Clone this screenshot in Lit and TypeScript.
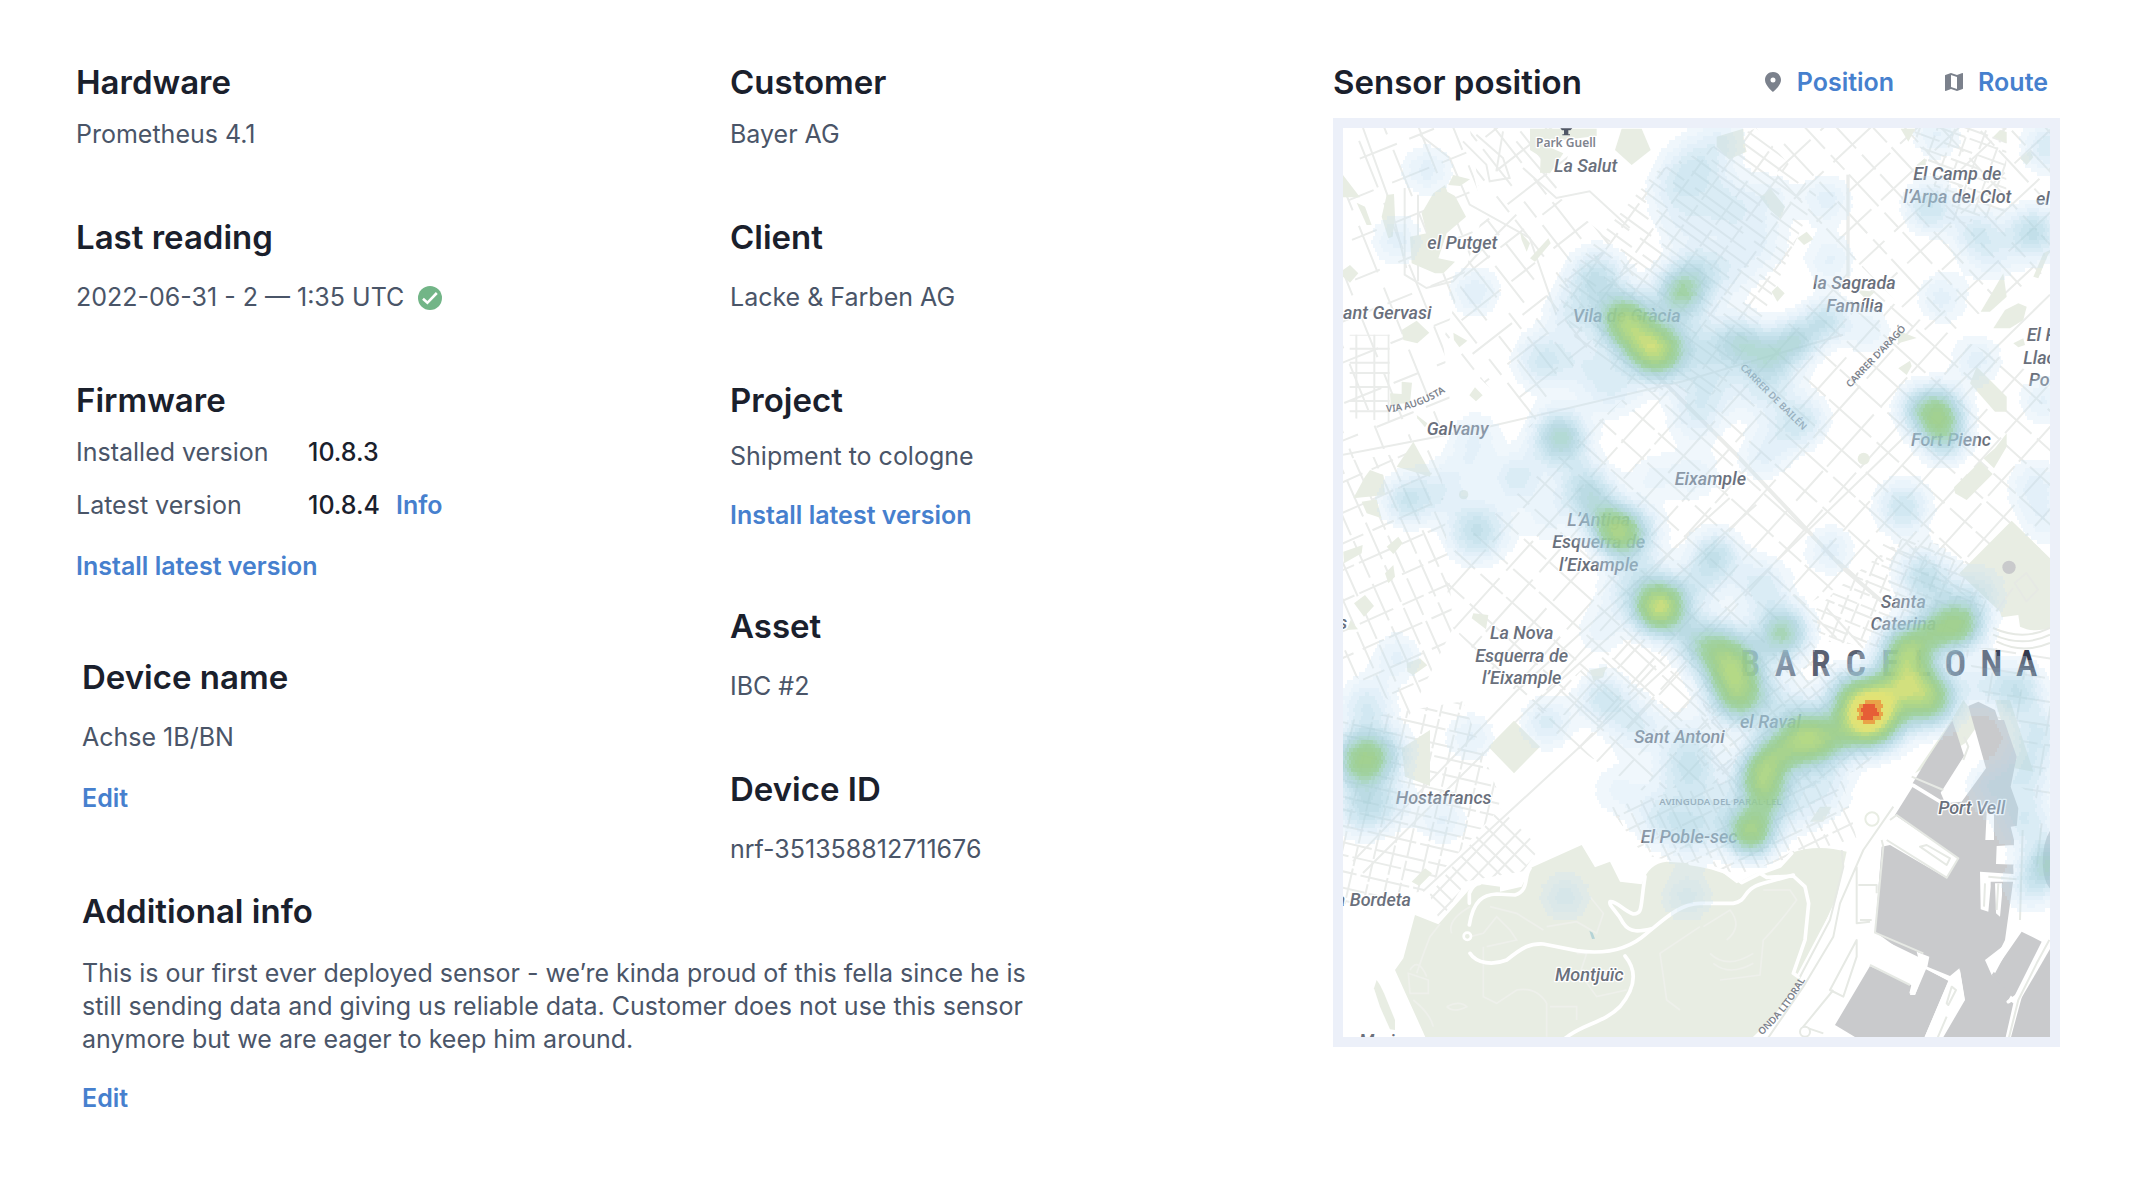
import { LitElement, html, css, svg } from "lit";
import { customElement } from "lit/decorators.js";

/* Map drawing units: three per CSS pixel on a wide screen. */
const MAP_W = 2121;
const MAP_H = 2727;

/* ---------- heat layer ---------- */

/* x, y, weight, spread (in thirds of the drawing unit) */
const HEAT: [number, number, number, number?][] = [
  [84, 42, 0.12], [54, 112, 0.12], [132, 164, 0.13], [354, 39, 0.16, 20], [327, 58, 0.08], [340, 92, 0.1, 20],
  [254, 149, 0.22, 18], [232, 184, 0.14, 18], [282, 192, 0.48, 15], [314, 222, 0.56, 16], [338, 165, 0.34, 15],
  [294, 214, 0.14, 14], [200, 232, 0.18, 18], [246, 238, 0.1, 18], [270, 262, 0.12, 18], [217, 310, 0.3, 16],
  [134, 305, 0.08], [380, 9, 0.08], [384, 78, 0.12, 18], [427, 69, 0.08, 18], [484, 72, 0.12], [487, 132, 0.11],
  [414, 115, 0.1, 20], [380, 146, 0.1, 20], [354, 140, 0.1, 16], [594, 6, 0.11], [704, 19, 0.16], [587, 79, 0.2, 16],
  [634, 105, 0.16, 16], [690, 105, 0.24, 17], [650, 132, 0.08], [599, 170, 0.12], [360, 215, 0.12, 18],
  [397, 215, 0.25, 16], [427, 229, 0.22, 16], [454, 212, 0.24, 15], [483, 192, 0.2, 14], [525, 202, 0.1],
  [367, 255, 0.13, 20], [424, 262, 0.13, 19], [464, 290, 0.12, 16], [352, 288, 0.12, 18], [594, 286, 0.42, 15],
  [570, 278, 0.1, 14], [602, 312, 0.2, 15], [634, 232, 0.12], [700, 272, 0.11], [174, 350, 0.15, 16],
  [244, 362, 0.25, 17], [276, 405, 0.46, 14], [260, 388, 0.16, 14], [300, 400, 0.1], [64, 372, 0.2, 16],
  [97, 362, 0.1], [124, 335, 0.08, 18], [134, 403, 0.24, 19], [204, 389, 0.08, 18], [310, 348, 0.08],
  [317, 479, 0.64, 15], [278, 462, 0.1, 16], [300, 440, 0.1], [354, 515, 0.2, 16], [257, 502, 0.09],
  [54, 529, 0.11], [24, 577, 0.16, 17], [20, 632, 0.46, 16], [48, 622, 0.12], [127, 609, 0.11], [204, 595, 0.15, 16],
  [260, 570, 0.18, 16], [292, 596, 0.14, 18], [420, 329, 0.11], [447, 302, 0.1], [352, 348, 0.1], [560, 379, 0.2, 17],
  [692, 359, 0.12, 18], [702, 396, 0.08], [487, 422, 0.12], [372, 427, 0.22, 16], [356, 456, 0.12, 16],
  [418, 458, 0.16, 18], [580, 448, 0.22, 17], [636, 464, 0.12, 17], [600, 470, 0.08], [440, 505, 0.34, 15],
  [387, 535, 0.46, 17], [397, 568, 0.4, 16], [372, 512, 0.1], [618, 497, 0.38, 14], [592, 503, 0.26, 13], [564, 522, 0.46, 15],
  [564, 552, 0.3, 14], [586, 570, 0.48, 16], [527, 584, 0.9, 18], [545, 560, 0.1, 14], [515, 600, 0.1, 16],
  [464, 610, 0.52, 16], [432, 626, 0.3, 14], [490, 614, 0.16, 14], [500, 560, 0.12, 14], [674, 562, 0.22, 17], [638, 555, 0.1],
  [695, 606, 0.16, 18], [440, 575, 0.1, 18], [222, 769, 0.12], [344, 769, 0.12], [20, 682, 0.2, 17],
  [48, 675, 0.1], [100, 692, 0.11], [347, 642, 0.2, 20], [318, 689, 0.14, 18], [274, 662, 0.08, 18], [350, 703, 0.16, 18],
  [417, 647, 0.36, 14], [424, 670, 0.26, 14], [408, 704, 0.48, 14], [378, 680, 0.1, 16], [480, 659, 0.13, 19],
  [457, 685, 0.07], [647, 659, 0.12], [684, 645, 0.14, 17], [682, 692, 0.16, 18], [707, 735, 0.26, 14],
  [686, 758, 0.14, 16], [345, 610, 0.08, 18],
];

/* Strong sources spread further than the faint ones. */
const SOURCES = HEAT.map(([x, y, w, s = 16]) =>
  w >= 0.26 ? { x, y, w: w * 1.15, s: s * 1.2 } : { x, y, w, s: s * 1.1 }
);

type Stop = [number, number, number, number, number];
const RAMP: Stop[] = [
  [0.045, 210, 230, 246, 0.27],
  [0.1, 196, 223, 243, 0.38],
  [0.18, 176, 214, 233, 0.56],
  [0.27, 162, 206, 220, 0.72],
  [0.35, 158, 208, 200, 0.8],
  [0.43, 152, 206, 158, 0.9],
  [0.54, 154, 205, 140, 0.95],
  [0.68, 178, 216, 132, 0.98],
  [0.82, 222, 227, 120, 1],
  [0.94, 226, 226, 116, 1],
];
const LEVELS = 30;
const FLOOR = 0.045;
const ORANGE = 0.98;
const RED = 1.05;

function rampColor(v: number): string {
  if (v > RED) return "rgb(230,94,54)";
  if (v > ORANGE) return "rgb(233,163,72)";
  let i = 0;
  while (i < RAMP.length - 2 && v > RAMP[i + 1][0]) i++;
  const a = RAMP[i];
  const b = RAMP[i + 1];
  const t = Math.max(0, Math.min(1, (v - a[0]) / (b[0] - a[0])));
  const mix = (k: number) => a[k] + (b[k] - a[k]) * t;
  return `rgba(${Math.round(mix(1))},${Math.round(mix(2))},${Math.round(mix(3))},${mix(4).toFixed(2)})`;
}

/* Rows of cells, every second row shifted by half a cell, merged into runs per level. */
function heatPaths() {
  const cell = 4;
  const cols = Math.ceil(707 / cell) + 1;
  const rows = Math.ceil(909 / cell);
  const d: string[] = Array.from({ length: LEVELS + 3 }, () => "");
  for (let r = 0; r < rows; r++) {
    const shift = r % 2 ? -2 : 0;
    const y = r * cell + 2;
    let start = 0;
    let prev = -1;
    for (let c = 0; c <= cols; c++) {
      let lvl = -1;
      if (c < cols) {
        const x = c * cell + shift + 2;
        let v = 0;
        for (const h of SOURCES) {
          const q = (h.x - x) ** 2 + (h.y - y) ** 2;
          if (q < 12 * h.s * h.s) v += h.w * Math.exp(-q / (2 * h.s * h.s));
        }
        if (v > RED) lvl = LEVELS + 2;
        else if (v > ORANGE) lvl = LEVELS + 1;
        else if (v > FLOOR) lvl = Math.floor(((v - FLOOR) / (ORANGE - FLOOR)) * LEVELS);
      }
      if (lvl !== prev) {
        if (prev >= 0) {
          const x0 = (start * cell + shift) * 3;
          const w = (c - start) * cell * 3;
          d[prev] += `M${x0} ${r * cell * 3}h${w}v12h-${w}z`;
        }
        start = c;
        prev = lvl;
      }
    }
  }
  return d.map((path, i) => {
    const v = i > LEVELS + 1 ? 3 : i > LEVELS ? (ORANGE + RED) / 2 : FLOOR + ((i + 0.5) / LEVELS) * (ORANGE - FLOOR);
    return path ? svg`<path fill=${rampColor(v)} d=${path}></path>` : null;
  });
}

/* ---------- street layer ---------- */

interface Zone {
  id: string;
  area: string;
  cx: number;
  cy: number;
  reach: number;
  angle: number;
  a: number;
  b: number;
  dashA?: string;
  dashB?: string;
}

const ZONES: Zone[] = [
  { id: "eixample", area: "M300 1300L620 1010L900 760L1100 830L1500 420L1700 560L2121 760V1240L1900 1420L1640 1290L1300 1480L1180 1700L1000 1830L560 1740L330 1500Z", cx: 1150, cy: 1200, reach: 1500, angle: 42, a: 84, b: 84, dashA: "170 22 90 14", dashB: "120 30 210 18" },
  { id: "gracia", area: "M640 480L940 130L1240 0L1420 200L1260 560L1130 800L880 790L700 640Z", cx: 950, cy: 450, reach: 700, angle: 36, a: 32, b: 74, dashA: "260 40", dashB: "90 20 60 12" },
  { id: "camp", area: "M1320 0L2121 0V420L1780 640L1520 380L1300 160Z", cx: 1800, cy: 250, reach: 700, angle: 47, a: 76, b: 92, dashA: "130 26 60 20", dashB: "180 40" },
  { id: "clot", area: "M1710 0H1990V250L1820 300Z", cx: 1860, cy: 130, reach: 300, angle: 20, a: 34, b: 46, dashA: "90 14", dashB: "60 16" },
  { id: "salut", area: "M380 0H700L640 200L900 420L560 900L300 640L420 260Z", cx: 600, cy: 420, reach: 700, angle: 52, a: 62, b: 96, dashA: "140 60 60 30", dashB: "90 40 150 70" },
  { id: "gervasi", area: "M0 0H360L420 260L300 640L330 900L0 1000Z", cx: 150, cy: 480, reach: 620, angle: 68, a: 92, b: 110, dashA: "150 50", dashB: "80 40 120 60" },
  { id: "augusta", area: "M20 620H140V880L20 870Z", cx: 80, cy: 750, reach: 240, angle: 0, a: 38, b: 50 },
  { id: "corts", area: "M0 1000L290 960L330 1500L200 1760L0 1620Z", cx: 150, cy: 1350, reach: 560, angle: 66, a: 52, b: 80, dashA: "120 20", dashB: "70 30 110 16" },
  { id: "hosta", area: "M0 1780L360 1720L480 2030L240 2290L0 2330Z", cx: 200, cy: 2030, reach: 420, angle: 13, a: 44, b: 50, dashA: "150 12", dashB: "90 10 60 8" },
  { id: "bordeta", area: "M260 2300L470 2040L590 2160L540 2230L370 2260L290 2380Z", cx: 430, cy: 2220, reach: 240, angle: 44, a: 38, b: 46 },
  { id: "antoni", area: "M560 1760L860 1500L1080 1600L1180 1760L1180 1960L900 1990L760 1900Z", cx: 900, cy: 1780, reach: 460, angle: 43, a: 80, b: 74, dashA: "180 24", dashB: "120 18" },
  { id: "poble", area: "M800 2040L1120 1960L1500 1960L1540 2130L1400 2170L1180 2240L900 2180Z", cx: 1150, cy: 2080, reach: 440, angle: 64, a: 38, b: 56, dashA: "130 12", dashB: "100 14" },
  { id: "raval", area: "M1090 1640L1400 1540L1580 1690L1700 1760L1560 1920L1260 2030L1060 1900Z", cx: 1350, cy: 1780, reach: 400, angle: 52, a: 36, b: 42, dashA: "90 12", dashB: "60 10" },
  { id: "gotic", area: "M1400 1460L1520 1350L1680 1230L1800 1250L1930 1420L1880 1560L1640 1560L1440 1540Z", cx: 1660, cy: 1410, reach: 360, angle: 22, a: 32, b: 44, dashA: "80 12 50 8", dashB: "60 14" },
  { id: "marina", area: "M1860 1560H2121V2040L2010 1960L1950 1760Z", cx: 2000, cy: 1780, reach: 340, angle: 9, a: 66, b: 90, dashA: "140 20", dashB: "90 30" },
];

function streetLines(z: Zone, across: boolean): string {
  const step = across ? z.b : z.a;
  let d = "";
  let i = 0;
  for (let o = -z.reach; o <= z.reach; o += step) {
    const j = ((i * 37) % 11) - 5;
    d += across ? `M${o + j} ${-z.reach + j * 9}V${z.reach}` : `M${-z.reach + j * 9} ${o + j}H${z.reach}`;
    i++;
  }
  return d;
}

const streets = () => ZONES.map(
  (z) => svg`
    <clipPath id=${"zone-" + z.id}><path d=${z.area}></path></clipPath>
    <g clip-path=${`url(#zone-${z.id})`}>
      <g transform=${`translate(${z.cx} ${z.cy}) rotate(${z.angle})`}>
        <path d=${streetLines(z, false)} stroke-dasharray=${z.dashA ?? "none"}></path>
        <path d=${streetLines(z, true)} stroke-dasharray=${z.dashB ?? "none"}></path>
      </g>
    </g>`
);

/* ---------- labels ---------- */

type Label = [string, number, number, ("start" | "end")?];
const PLACES: Label[] = [
  ["La Salut", 728, 133], ["el Putget", 358, 363], ["ant Gervasi", 0, 574, "start"], ["Vila de Gràcia", 851, 581],
  ["Galvany", 344, 921], ["El Camp de", 1843, 156], ["l’Arpa del Clot", 1843, 224], ["el", 2079, 232, "start"],
  ["la Sagrada", 1534, 483], ["Família", 1535, 551], ["El P", 2051, 640, "start"], ["Llac", 2041, 708, "start"],
  ["Po", 2057, 774, "start"], ["Fort Pienc", 1824, 954], ["L’Antiga", 767, 1194], ["Esquerra de", 767, 1261],
  ["l’Eixample", 767, 1328], ["La Nova", 536, 1534], ["Esquerra de", 536, 1601], ["l’Eixample", 536, 1668],
  ["s", 13, 1503, "end"], ["Eixample", 1102, 1071], ["Santa", 1681, 1441], ["Caterina", 1681, 1506],
  ["el Raval", 1191, 1799, "start"], ["Sant Antoni", 873, 1844, "start"], ["Hostafrancs", 302, 2028],
  ["El Poble-sec", 893, 2146, "start"], ["a Bordeta", 204, 2335, "end"], ["Montjuïc", 739, 2559],
  ["La Marina", 95, 2756], ["Port Vell", 1886, 2059],
];

const CITY = "BARCELONA";
const CITY_X = [1221, 1327, 1433, 1538, 1641, 1738, 1837, 1945, 2051];
const CITY_FILL = ["#6a7080", "#5a6172", "#5a6172", "#5a6172", "#6a7080", "#6a7080", "#4a5164", "#3c4357", "#333a4d"];

@customElement("sensor-map")
export class SensorMap extends LitElement {
  static styles = css`
    :host { display: block; border: 10px solid #ecf0f9; background: #fff; }
    svg { display: block; width: 100%; height: auto; }
    .place { font: italic 500 54px Roboto, "Liberation Sans", sans-serif; fill: #6a707c; text-anchor: middle; }
    .place.start { text-anchor: start; }
    .place.end { text-anchor: end; }
    .halo { paint-order: stroke; stroke: #fff; stroke-width: 8px; stroke-linejoin: round; }
    .road { font: 600 29px "Noto Sans", sans-serif; fill: #7c828c; }
    .poi { font: 600 36px "Noto Sans", sans-serif; fill: #7f848e; text-anchor: middle; }
    .city { font: 600 108px "Liberation Sans Narrow", "Roboto Condensed", Roboto, sans-serif; text-anchor: middle; }
    .park { fill: #e8ede3; }
    .water { fill: #c9cacc; }
    .streets { fill: none; stroke: #eaecea; stroke-width: 6; }
    .trail { fill: none; stroke: #eef0eb; stroke-width: 5; }
    .avenue { fill: none; stroke: #fff; stroke-width: 11; stroke-linecap: round; stroke-linejoin: round; }
    .pier { fill: #fff; }
    .quay { fill: none; stroke: #e6e9e4; stroke-width: 6; stroke-linejoin: round; }
  `;

  render() {
    return html`
      <svg viewBox="0 0 ${MAP_W} ${MAP_H}" role="img" aria-label="Sensor position">
        <g class="streets">${streets()}</g>

        <g class="streets">
          <path d="M0 980L420 900L1020 760L1500 620" />
          <path d="M30 2200L520 1690L1160 1110M60 2235L560 1740L1240 1130" />
          <path d="M240 2290L1000 1590L1640 970L2121 500" />
          <path d="M900 700L1180 980L1500 1320L1640 1440" stroke-width="12" />
          <path d="M1515 140V480" stroke-width="10" />
          <path d="M60 0L140 220L190 420M230 20L320 90L380 230L560 330L640 560" />
          <path d="M185 180V440L250 480L330 460L420 360L520 260M225 200V460" />
          <path d="M400 20L480 90L500 150L440 160L430 110L360 40M480 10L460 130" />
          <path d="M540 120L640 210L740 190L860 300M520 40L640 180" />
          <path d="M1620 1250L1700 1290L1760 1220M1450 1440L1560 1560M1350 1400L1480 1530" />
        </g>

        <!-- parks -->
        <g class="park" transform="translate(-39 -54)">
          <path d="M345 225L352 245L375 258L408 320L350 370L325 445L375 455L340 490L315 490L245 460L240 380L290 370L275 310L310 250Z" />
          <path d="M600 56H800V78L700 90L655 110L700 130L660 190L630 188L632 140L600 120Z" />
          <path d="M875 56H935L962 120L905 165L855 120Z" />
          <path d="M370 195L420 208L390 228L355 225Z" />
          <path d="M170 255L192 252L195 320L188 380L175 385L155 320Z" />
          <path d="M39 195L90 262L39 262Z" /><path d="M80 278L105 290L125 345L110 345Z" />
          <path d="M215 660L260 632L298 668L262 700L220 690Z" />
          <path d="M370 668L412 692L388 712L372 690Z" />
          <path d="M180 850L215 852L215 815L246 818L240 880L182 882Z" />
          <path d="M260 915L292 940L285 952L262 925Z" /><path d="M435 832L458 856L438 874L418 856Z" />
          <path d="M600 445L655 385L662 400L615 455Z" /><path d="M570 365L600 400L590 425L575 390Z" />
          <path d="M39 480L60 465L85 490L60 518L39 500Z" />
          <path d="M250 995L302 1090L300 1100L200 1070Z" /><path d="M70 1165L105 1100L120 1080L160 1095L165 1155Z" />
          <path d="M95 1175L140 1168L155 1225L110 1210Z" /><path d="M40 1325L98 1305L95 1330L42 1360Z" />
          <path d="M170 1310L205 1280L218 1300L190 1332Z" /><path d="M165 1390L190 1365L195 1400L175 1420Z" />
          <path d="M72 1480L105 1455L132 1488L102 1520Z" /><path d="M430 1510L475 1515L468 1558L425 1525Z" />
          <path d="M50 1560L62 1530L84 1558Z" /><circle cx="401" cy="1154" r="14" />
          <path d="M475 1910L552 1832L630 1910L552 1990Z" /><path d="M780 1680L828 1670L820 1702L790 1712Z" />
          <path d="M230 1660L270 1645L292 1666L250 1695L232 1685Z" />
          <path d="M215 1915L300 1860V2028L225 2000Z" /><path d="M245 2315L285 2275L306 2290L268 2328Z" />
        </g>
        <g class="park" transform="translate(1041 -54)">
          <path d="M80 80L160 56L162 95L170 125L118 148L80 110Z" /><path d="M210 262L242 236L285 290L272 328L240 300Z" />
          <path d="M322 385L350 365L370 388L342 405Z" /><path d="M245 545L262 528L284 550L262 575Z" />
          <path d="M632 56H675L655 95Z" /><path d="M910 80L930 60L950 66V100Z" /><path d="M990 145L1020 122L1030 142L1010 165Z" />
          <path d="M680 165L705 145L708 165Z" /><path d="M872 605L905 550L940 490L950 560L900 605Z" />
          <path d="M910 655L945 600L985 580L1010 590L1000 630L960 655Z" /><path d="M1030 500L1060 430L1080 420L1045 505Z" />
          <path d="M625 775L660 752L665 768L650 795Z" /><path d="M620 660L680 684L625 700Z" />
          <path d="M860 770L950 860V905L915 905L840 820Z" /><path d="M500 540L555 545L530 570Z" />
          <path d="M970 700L1000 685L1005 705L985 712Z" />
          <path d="M792 1132L870 1055L908 1092L830 1170L795 1150Z" /><path d="M880 1045L915 1015L950 970V1010L912 1075Z" />
          <circle cx="521" cy="1046" r="18" />
          <path d="M965 1232L1080 1345V1555Q1040 1565 1010 1558L990 1550L985 1515L935 1522L930 1505L808 1390Z" />
          <path d="M675 1990L785 1830L820 1770L850 1810L860 1850L825 1900Z" />
          <path d="M915 1770L960 1770L1030 1985L975 1975Z" />
          <path d="M390 2090H425L400 2135H360Z" />
        </g>
        <circle cx="1998" cy="1318" r="20" fill="#c9cacc" />

        <!-- hill park with its drives -->
        <g transform="translate(-39 1836)">
          <path class="park" d="M255 525L325 553L435 430L510 440L510 455L575 440L600 385L755 315L795 382L840 365L870 425L935 433Q955 370 1010 365L1080 370L1160 385L1220 430L1280 400L1350 375L1380 340Q1460 310 1550 335L1520 470L1440 650L1400 740L1330 830L1260 900H290L195 690L220 655Z" />
          <path class="park" d="M140 720L150 735L162 760L195 840V870L180 868L150 800L132 745Z" />
          <path class="trail" d="M365 580Q350 540 420 500M260 700Q280 640 300 590L330 552M420 590L460 580L500 530L540 570L560 600L470 620M460 620V770L500 790L560 750Q620 740 650 790V890M650 560L740 545L800 580L820 520L780 470M1110 560L990 640L1010 780L1050 810M640 570L560 520L480 500" />
          <path class="trail" d="M235 700L295 720V760H240ZM240 690Q265 650 290 710M250 780Q300 820 310 860M350 800Q390 780 410 800Q370 820 350 800M740 640L770 640L750 700L800 770L890 750M660 800H740V840M1170 720L1290 705L1300 600Q1340 560 1400 480L1380 450L1300 450M1140 640Q1190 690 1270 640M1150 670Q1200 710 1270 670M1120 560L1200 510Q1240 560 1190 600" />
          <path class="avenue" d="M418 555C430 480 460 464 500 462L555 465C600 450 580 410 600 385M418 490V460Q430 430 450 430M420 640C440 672 490 676 530 660C580 620 600 610 640 612L740 632C830 645 900 625 950 580C1000 540 1050 490 1110 490H1210C1260 480 1230 450 1300 430L1390 405" />
          <path class="avenue" d="M945 410C930 500 940 522 910 522C880 512 860 482 840 485C836 500 860 510 880 550C900 580 930 574 965 566M885 648C920 690 920 740 870 800C820 850 760 850 705 895" />
          <path class="avenue" d="M1080 370Q1180 385 1220 415L1235 428L1290 400L1350 378L1385 340M1290 400L1310 412L1390 408L1425 440L1436 490L1425 600L1390 700L1405 710L1500 530L1530 470" />
          <circle cx="412" cy="589" r="11" fill="#e8ede3" stroke="#fff" stroke-width="8" />
          <path d="M778 572L788 578L795 596L786 597Z" fill="#b5d3d6" />
        </g>

        <!-- harbour -->
        <g transform="translate(1041 1836)">
          <path class="pier" d="M560 900H205L330 720L430 560L600 240L668 130L760 190V900Z" />
          <path class="water" d="M787-58L800-20L822 48L752 158L765 188L700 158L668 130L710 60Z" />
          <path class="water" d="M668 140L765 190L815 185L888 85L835-102L865-115L915-90L925-60H942L980 50L962 140L985 205L980 262L985 320L970 380L975 420L965 560L950 610L885 660L905 705L950 735L975 745L955 780L970 790L945 900H755L825 780L810 690L775 715L700 680L555 575L575 320L600 315L770 415L805 355L615 225Z" />
          <path class="water" d="M540 678L665 735L660 765H675L705 685L775 722L700 900H510L435 855Z" />
          <path class="water" d="M995 575L1055 605L970 775L940 740L905 705Z" />
          <path class="water" d="M1090 610V900H955L985 790Z" />
          <path class="water" d="M1085 265Q1058 300 1058 370Q1060 430 1085 450Z" />
          <path class="pier" d="M890 218H912V300H886ZM920 318L985 314V374L918 372ZM870 395L980 403V425H902V440L895 515L872 508ZM915 430H936V465L930 530L918 520ZM962 260L998 255L990 300V540L960 615L915 700L885 660L905 680L945 600L970 420L972 300Z" />
          <path class="pier" d="M680 635L718 650L712 680L780 708L808 685L812 705L824 780L735 900H700L776 722L708 688L675 765L658 760L664 735L540 678L500 600L550 585L684 650Z" />
          <path class="avenue" d="M1085 580L1040 660L990 770L955 900M955 785L985 765M670 136L752 186" />
          <path class="quay" d="M600 240L620 225L805 355L770 413L590 300M690 320L770 375L780 355L710 315ZM575 300L580 320L555 578L700 640M455 330L460 380L420 540L330 710M500 380V550L540 545M505 435H560V460M510 540H545M610 200L520 330L450 490L430 590L340 740L230 900M500 600L420 750L460 770L500 650ZM540 675L660 735M430 750L340 860L400 880M1078 600L1040 670L985 780L955 900M998 270L990 540M1055 250L1040 380M895 410L980 418M885 430L882 500M925 430L920 510M770 830L740 900M770 790L785 740L798 750L775 795ZM665 110L760 150M820 60L835 20L822-10" />
          <circle cx="546" cy="237" r="20" fill="#fff" stroke="#e8ede3" stroke-width="6" />
          <circle cx="345" cy="875" r="15" fill="#fff" stroke="#e6e9e4" stroke-width="6" />
        </g>
        <path class="quay" d="M1950 1500Q2040 1540 2121 1500M1950 1520Q2040 1560 2121 1520M1960 1540Q2040 1580 2121 1545" />
        <path class="quay" d="M2015 1365L2050 1335L2085 1385L2050 1420ZM2010 1380L1960 1450" />

        <!-- labels -->
        <path d="M652 1h36l-6 6h-6v12h5v3h-23v-3h5v-12h-6z" fill="#4f5665" />
        <text class="poi halo" x="669" y="56">Park Guell</text>
        ${PLACES.map(([t, x, y, a]) => svg`<text class=${"place halo " + (a ?? "")} x=${x} y=${y}>${t}</text>`)}
        ${[...CITY].map((c, i) => svg`<text class="city" x=${CITY_X[i]} y="1644" fill=${CITY_FILL[i]}>${c}</text>`)}
        <path id="augusta" fill="none" d="M130 852Q230 850 335 772" />
        <path id="arago" fill="none" d="M1522 780L1716 576" />
        <path id="bailen" fill="none" d="M1190 720L1410 938" />
        <path id="litoral" fill="none" d="M1256 2722Q1340 2650 1400 2530" />
        <text class="road"><textPath href="#augusta">VIA AUGUSTA</textPath></text>
        <text class="road"><textPath href="#arago">CARRER D’ARAGÓ</textPath></text>
        <text class="road"><textPath href="#bailen">CARRER DE BAILÉN</textPath></text>
        <text class="road"><textPath href="#litoral">ONDA LITORAL</textPath></text>
        <text class="road" x="949" y="2030">AVINGUDA DEL PARAL·LEL</text>

        <g>${heatPaths()}</g>
      </svg>
    `;
  }
}

@customElement("app-root")
export class AppRoot extends LitElement {
  static styles = css`
    :host {
      display: block;
      background: #fff;
      color: #4a5568;
      font: 400 25px/33px Inter, "Liberation Sans", sans-serif;
    }
    .page { display: flex; padding: 62px 78px 40px 76px; }
    .details { flex: 1257; min-width: 0; }
    .position { flex: 727; min-width: 0; }
    .columns { display: grid; grid-template-columns: 654fr 603fr; }
    .column { display: flex; flex-direction: column; gap: 66px; }
    .group { display: flex; flex-direction: column; gap: 74px; }
    .inset { padding-left: 6px; }
    h2 { margin: 0; font-size: 33px; line-height: 40px; font-weight: 600; color: #1a202c; }
    p, dl, dd, dt { margin: 0; }
    a { color: #4680ce; font-weight: 600; text-decoration: none; }
    .field { display: flex; flex-direction: column; align-items: flex-start; gap: 24px; }
    .field.tight { gap: 16px; }
    .field.medium { gap: 20px; }
    .field.medium .body { gap: 26px; }
    .body { display: flex; flex-direction: column; align-items: flex-start; gap: 28px; }
    .reading { display: flex; align-items: center; gap: 14px; }
    .reading svg { width: 24px; height: 24px; }
    .versions { display: grid; grid-template-columns: 232px auto; row-gap: 20px; }
    .versions dd { display: flex; gap: 16px; font-weight: 500; color: #1a202c; }
    .field.note { max-width: 950px; margin-top: 25px; gap: 26px; }
    .head { display: flex; align-items: center; padding: 0 12px 16px 0; }
    .head h2 { flex: 1; }
    .modes { display: flex; gap: 48px; }
    .modes a { display: flex; align-items: center; gap: 12px; }
    .modes svg { width: 24px; height: 24px; fill: #7b818c; }
  `;

  private field(title: string, body: unknown, spacing = "") {
    return html`<section class="field ${spacing}"><h2>${title}</h2>${body}</section>`;
  }

  render() {
    return html`
      <main class="page">
        <div class="details">
          <div class="columns">
            <div class="column">
              ${this.field("Hardware", html`<p>Prometheus 4.1</p>`, "tight")}
              ${this.field("Last reading", html`
                <p class="reading">2022-06-31 - 2 — 1:35 UTC
                  <svg viewBox="0 0 24 24" aria-hidden="true">
                    <circle cx="12" cy="12" r="12" fill="#72b587" />
                    <path d="M5 12.8L9.4 16.8L18.8 7" fill="none" stroke="#fff" stroke-width="2.6" />
                  </svg>
                </p>`)}
              <div class="group">
                ${this.field("Firmware", html`
                  <div class="body">
                    <dl class="versions">
                      <dt>Installed version</dt><dd>10.8.3</dd>
                      <dt>Latest version</dt><dd>10.8.4 <a href="#info">Info</a></dd>
                    </dl>
                    <a href="#install">Install latest version</a>
                  </div>`, "tight")}
                <div class="inset">
                  ${this.field("Device name", html`
                    <div class="body"><p>Achse 1B/BN</p><a href="#edit-name">Edit</a></div>`)}
                </div>
              </div>
            </div>
            <div class="column">
              ${this.field("Customer", html`<p>Bayer AG</p>`, "tight")}
              ${this.field("Client", html`<p>Lacke &amp; Farben AG</p>`)}
              <div class="group">
                ${this.field("Project", html`
                  <div class="body"><p>Shipment to cologne</p><a href="#install-project">Install latest version</a></div>`, "medium")}
                ${this.field("Asset", html`<p>IBC #2</p>`)}
              </div>
              ${this.field("Device ID", html`<p>nrf-351358812711676</p>`)}
            </div>
          </div>
          <div class="inset">
            ${this.field("Additional info", html`
              <p>This is our first ever deployed sensor - we’re kinda proud of this fella since he is still sending data and giving us reliable data. Customer does not use this sensor anymore but we are eager to keep him around.</p>
              <a href="#edit-info">Edit</a>`, "note")}
          </div>
        </div>
        <section class="position">
          <div class="head">
            <h2>Sensor position</h2>
            <nav class="modes">
              <a href="#position">
                <svg viewBox="0 0 24 24" aria-hidden="true"><path fill-rule="evenodd" d="M12 2C7.4 2 4 5.500 4 9.900C4 15.600 12 22 12 22S20 15.600 20 9.900C20 5.500 16.600 2 12 2ZM12 7.400A2.500 2.500 0 1 1 12 12.400A2.500 2.500 0 1 1 12 7.400Z" /></svg>Position</a>
              <a href="#route">
                <svg viewBox="0 0 24 24" aria-hidden="true"><path d="M20.500 3l-.16.03L15 5.100 9 3 3.360 4.900c-.21.070-.36.250-.36.480V20.500c0 .28.220.5.5.5l.16-.03L9 18.900l6 2.100 5.640-1.900c.21-.07.36-.25.36-.48V3.500c0-.28-.22-.5-.5-.5zM15 19l-6-2.110V5l6 2.110V19z" /></svg>Route</a>
            </nav>
          </div>
          <sensor-map></sensor-map>
        </section>
      </main>
    `;
  }
}
